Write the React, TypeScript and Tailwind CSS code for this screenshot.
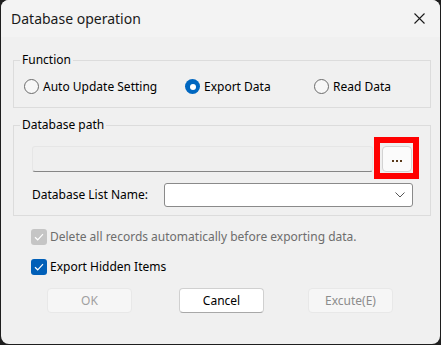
import React from "react";

function Radio({ checked }: { checked?: boolean }) {
  if (checked) {
    return (
      <span className="flex h-[15px] w-[15px] shrink-0 items-center justify-center rounded-full bg-[#0067c0]">
        <span className="h-[6px] w-[6px] rounded-full bg-white" />
      </span>
    );
  }
  return <span className="h-[15px] w-[15px] shrink-0 rounded-full border border-[#6b6b6b] bg-[#f7f7f7]" />;
}

function Check({ disabled }: { disabled?: boolean }) {
  return (
    <span
      className={
        "flex h-[16px] w-[16px] shrink-0 items-center justify-center rounded-[3px] " +
        (disabled ? "bg-[#c5c5c5]" : "bg-[#005fb8]")
      }
    >
      <svg width="10" height="8" viewBox="0 0 10 8" fill="none">
        <path d="M1 4.2 L3.7 6.8 L9 1.2" stroke="white" strokeWidth="1.2" />
      </svg>
    </span>
  );
}

export default function App() {
  return (
    <div className="h-[345px] w-[441px] bg-[#1e1e1e] font-['Noto_Sans',sans-serif] text-[12px] leading-[16px] text-black">
      <div className="ml-[1px] flex h-[344px] w-[439px] flex-col overflow-hidden rounded-[8px] bg-[#f0f0f0]">
        <div className="flex h-[37px] shrink-0 items-center bg-[#f3f3f3] pl-[10px]">
          <span className="text-[14px] leading-[18px] text-[#1a1a1a]">Database operation</span>
          <svg className="ml-auto mr-[15px]" width="11" height="11" viewBox="0 0 11 11" fill="none">
            <path d="M0.5 0.5 L10.5 10.5 M10.5 0.5 L0.5 10.5" stroke="#1a1a1a" strokeWidth="1.1" />
          </svg>
        </div>

        <div className="flex flex-col pt-[15px]">
          <fieldset className="ml-[12px] w-[418px] border border-[#dcdcdc]">
            <legend className="ml-[6px] px-[2px] leading-[16px]">Function</legend>
            <div className="flex h-[39px] items-center pb-[2px] pl-[10px]">
              <label className="flex w-[161px] items-center gap-[4px]">
                <Radio />
                <span>Auto Update Setting</span>
              </label>
              <label className="flex w-[129px] items-center gap-[4px]">
                <Radio checked />
                <span>Export Data</span>
              </label>
              <label className="flex items-center gap-[4px]">
                <Radio />
                <span>Read Data</span>
              </label>
            </div>
          </fieldset>

          <fieldset className="ml-[12px] mt-[9px] w-[418px] border border-[#dcdcdc] pb-[8px] pl-[18px] pt-[13px]">
            <legend className="ml-[-12px] px-[2px] leading-[16px]">Database path</legend>
            <div className="flex items-center">
              <div className="h-[26px] w-[341px] rounded-[3px] border border-[#e6e6e6] border-b-[#868686] bg-[#efefef]" />
              <div className="relative ml-[9px]">
                <div className="flex h-[26px] w-[30px] items-center justify-center gap-[2px] rounded-[4px] border border-[#d3d3d3] bg-[#fbfbfb] pt-[4px]">
                  <span className="h-[2px] w-[2px] bg-[#5a3a1a]" />
                  <span className="h-[2px] w-[2px] bg-[#5a3a1a]" />
                  <span className="h-[2px] w-[2px] bg-[#5a3a1a]" />
                </div>
                <div className="pointer-events-none absolute bottom-[-7px] left-[-8px] right-[-7px] top-[-9px] border-[6px] border-[#ff0000]" />
              </div>
            </div>
            <div className="mt-[11px] flex items-center">
              <span className="w-[132px]">Database List Name:</span>
              <div className="flex h-[24px] w-[249px] items-center justify-end rounded-[3px] border border-[#8a8a8a] bg-white pr-[7px]">
                <svg width="10" height="6" viewBox="0 0 10 6" fill="none">
                  <path d="M0.5 0.5 L5 5 L9.5 0.5" stroke="#555" strokeWidth="1" />
                </svg>
              </div>
            </div>
          </fieldset>

          <div className="ml-[30px] mt-[13px] flex h-[16px] items-center gap-[3px] text-[#6d6d6d]">
            <Check disabled />
            <span>Delete all records automatically before exporting data.</span>
          </div>
          <div className="ml-[30px] mt-[14px] flex h-[16px] items-center gap-[3px]">
            <Check />
            <span>Export Hidden Items</span>
          </div>

          <div className="mt-[13px] flex">
            <div className="ml-[46px] flex h-[25px] w-[85px] items-center justify-center rounded-[4px] border border-[#e8e8e8] bg-[#f6f6f6] text-[#a0a0a0]">
              OK
            </div>
            <div className="ml-[47px] flex h-[25px] w-[85px] items-center justify-center rounded-[4px] border border-[#d0d0d0] border-b-[#a8a8a8] bg-white">
              Cancel
            </div>
            <div className="ml-[44px] flex h-[25px] w-[85px] items-center justify-center rounded-[4px] border border-[#e8e8e8] bg-[#f6f6f6] text-[#8c8c8c]">
              Excute(E)
            </div>
          </div>
        </div>
      </div>
    </div>
  );
}
